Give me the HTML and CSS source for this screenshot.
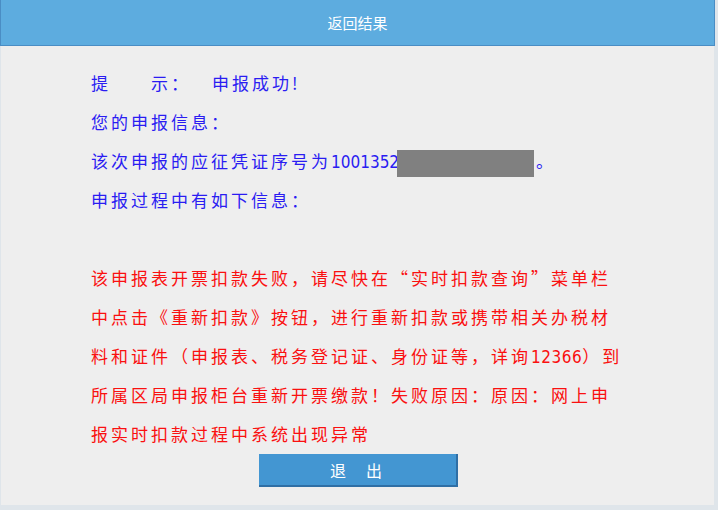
FILE: index.html
```html
<!DOCTYPE html>
<html lang="zh-CN">
<head>
<meta charset="utf-8">
<title>返回结果</title>
<link rel="stylesheet" href="styles.css">
</head>
<body>
<div class="panel">
  <div class="header">返回结果</div>
  <div class="content">
    <div class="line blue"><span class="lbl">提　　示：</span>申报成功!</div>
    <div class="line blue">您的申报信息：</div>
    <div class="line blue">该次申报的应征凭证序号为<span class="num">1001352</span><span class="mask"></span>。</div>
    <div class="line blue">申报过程中有如下信息：</div>
    <div class="line blank"></div>
    <div class="msg red">
      <div class="line">该申报表开票扣款失败，请尽快在“实时扣款查询”菜单栏</div>
      <div class="line">中点击《重新扣款》按钮，进行重新扣款或携带相关办税材</div>
      <div class="line">料和证件（申报表、税务登记证、身份证等，详询<span class="num red-num">12366</span>）到</div>
      <div class="line">所属区局申报柜台重新开票缴款！失败原因：原因：网上申</div>
      <div class="line">报实时扣款过程中系统出现异常</div>
    </div>
  </div>
  <div class="actions">
    <button class="btn" type="button">退　出</button>
  </div>
</div>
</body>
</html>
```
FILE: styles.css
```css
html, body {
  margin: 0;
  padding: 0;
}
body {
  background: #dfe5ea;
  width: 718px;
  height: 510px;
  overflow: hidden;
  font-family: "Noto Sans CJK SC", "DejaVu Sans", sans-serif;
}
.panel {
  width: 713px;
  height: 505px;
  margin-left: 1px;
  background: #eeeeee;
  display: flex;
  flex-direction: column;
}
.header {
  height: 45px;
  background: #5dacdf;
  border: 1px solid #4a8dc4;
  border-top: none;
  color: #ffffff;
  font-size: 15px;
  line-height: 45px;
  text-align: center;
  margin-left: -1px;
  width: 713px;
}
.content {
  padding: 17px 0 0 90px;
  font-size: 17px;
  letter-spacing: 3px;
}
.line {
  height: 39px;
  line-height: 39px;
  white-space: nowrap;
}
.lbl {
  display: inline-block;
  width: 121px;
}
.blue {
  color: #2a1cf2;
}
.red {
  color: #fa1010;
}
.num {
  letter-spacing: 0;
  font-family: "DejaVu Sans Condensed", "Liberation Sans", sans-serif;
}
.red-num {
  letter-spacing: 0.5px;
}
.mask {
  display: inline-block;
  width: 137px;
  height: 27px;
  background: #808080;
  vertical-align: middle;
  margin-left: -2px;
  margin-right: 2px;
}
.actions {
  display: flex;
  justify-content: center;
  padding-top: 1px;
}
.btn {
  width: 199px;
  height: 33px;
  background: #4396d2;
  border: none;
  border-right: 2px solid #2f6fa5;
  border-bottom: 2px solid #2f6fa5;
  color: #ffffff;
  font-family: "Noto Sans CJK SC", sans-serif;
  font-size: 16px;
  letter-spacing: 2px;
  padding: 0;
  margin-left: 1px;
}
```
